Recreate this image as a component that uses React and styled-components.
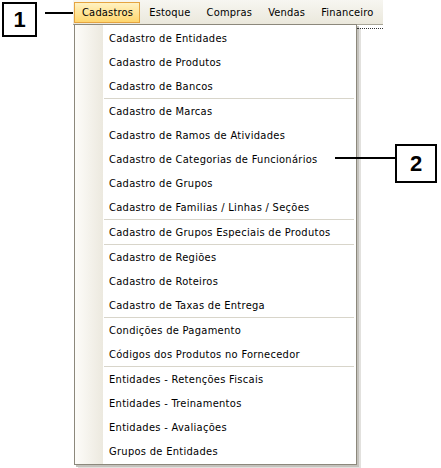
import styled, { createGlobalStyle } from 'styled-components'

const GlobalStyle = createGlobalStyle`
  html, body {
    margin: 0;
    padding: 0;
    background: #ffffff;
  }
  body {
    font-family: "DejaVu Sans Condensed", "DejaVu Sans", sans-serif;
    font-stretch: condensed;
    font-size: 11px;
    letter-spacing: 0.3px;
    color: #000000;
  }
`

const StyledPage = styled.div`
  position: relative;
  width: 441px;
  height: 468px;
  overflow: hidden;
  padding-left: 73px;
  box-sizing: border-box;
`
const StyledMenuBar = styled.div`
  display: flex;
  align-items: center;
  width: 310px;
  height: 25px;
  box-sizing: border-box;
  padding: 1px 0 0 1px;
  background: linear-gradient(#f7f6f1, #ebe8dc);
  border-bottom: 1px solid #a8a597;
`
const StyledBarItem = styled.div`
  height: 21px;
  display: flex;
  align-items: center;
  padding: ${(p) => (p.active ? '0 6px 0 7px' : '0 7px')};
  margin-right: ${(p) => (p.active ? '1px' : '0')};
  box-sizing: border-box;
  letter-spacing: 0.2px;
  border: 1px solid ${(p) => (p.active ? '#e5a440' : 'transparent')};
  background: ${(p) => (p.active ? 'linear-gradient(#fff2c2, #ffd66e)' : 'transparent')};
  white-space: nowrap;
`
const StyledDropRow = styled.div`
  display: flex;
  align-items: flex-start;
`
const StyledDropdown = styled.div`
  display: flex;
  width: 283px;
  margin-left: 1px;
  margin-top: -1px;
  box-sizing: border-box;
  border: 1px solid #8c887c;
  background: #ffffff;
  box-shadow: 2px 2px 0 #c4c2bc, 4px 4px 0 #e2e1de;
`
const StyledGutter = styled.div`
  width: 28px;
  flex-shrink: 0;
  background: linear-gradient(90deg, #fdfcf9, #ece9df);
`
const StyledList = styled.div`
  flex: 1;
  padding: 1px 0 1px 0;
`
const StyledItem = styled.div`
  height: 24px;
  display: flex;
  align-items: center;
  padding-left: 6px;
  white-space: nowrap;
  box-sizing: border-box;
`
const StyledSeparator = styled.div`
  height: 1px;
  margin: 0 2px 0 1px;
  background: #d8d5ca;
`
const StyledFocusLine = styled.div`
  width: 26px;
  margin-top: 3px;
  border-top: 1px dotted #333333;
`
const StyledCallout = styled.div`
  position: absolute;
  left: ${(p) => p.x}px;
  top: ${(p) => p.y}px;
  width: ${(p) => p.w}px;
  height: ${(p) => p.h}px;
  box-sizing: border-box;
  border: 2px solid #000000;
  background: #ffffff;
  display: flex;
  align-items: center;
  justify-content: center;
  font-family: "Liberation Sans", Arial, sans-serif;
  font-stretch: normal;
  letter-spacing: 0;
  font-weight: bold;
  font-size: 22px;
`
const StyledLeader = styled.div`
  position: absolute;
  left: ${(p) => p.x}px;
  top: ${(p) => p.y}px;
  width: ${(p) => p.w}px;
  height: 2px;
  background: #000000;
`

const menus = ['Cadastros', 'Estoque', 'Compras', 'Vendas', 'Financeiro']

const groups = [
  ['Cadastro de Entidades', 'Cadastro de Produtos', 'Cadastro de Bancos'],
  [
    'Cadastro de Marcas',
    'Cadastro de Ramos de Atividades',
    'Cadastro de Categorias de Funcionários',
    'Cadastro de Grupos',
    'Cadastro de Familias / Linhas / Seções',
  ],
  ['Cadastro de Grupos Especiais de Produtos'],
  ['Cadastro de Regiões', 'Cadastro de Roteiros', 'Cadastro de Taxas de Entrega'],
  ['Condições de Pagamento', 'Códigos dos Produtos no Fornecedor'],
  [
    'Entidades - Retenções Fiscais',
    'Entidades - Treinamentos',
    'Entidades - Avaliações',
    'Grupos de Entidades',
  ],
]

export default function App() {
  return (
    <StyledPage>
      <GlobalStyle />
      <StyledMenuBar>
        {menus.map((menu, index) => (
          <StyledBarItem key={menu} active={index === 0}>{menu}</StyledBarItem>
        ))}
      </StyledMenuBar>
      <StyledDropRow>
        <StyledDropdown>
          <StyledGutter />
          <StyledList>
            {groups.map((group, gi) => (
              <div key={gi}>
                {gi > 0 && <StyledSeparator />}
                {group.map((label) => (
                  <StyledItem key={label}>{label}</StyledItem>
                ))}
              </div>
            ))}
          </StyledList>
        </StyledDropdown>
        <StyledFocusLine />
      </StyledDropRow>

      <StyledCallout x={2} y={2} w={35} h={35}>1</StyledCallout>
      <StyledLeader x={45} y={12} w={28} />
      <StyledCallout x={395} y={144} w={42} h={39}>2</StyledCallout>
      <StyledLeader x={335} y={157} w={60} />
    </StyledPage>
  )
}
